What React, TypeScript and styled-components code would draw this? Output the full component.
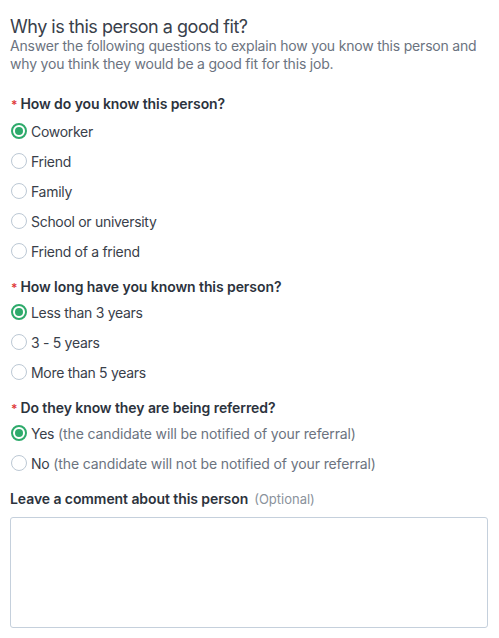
import React, { FC, useState } from 'react';
import styled, { createGlobalStyle } from 'styled-components';

const GlobalStyle = createGlobalStyle`
  body {
    margin: 0;
    background: #fff;
    font-family: Inter, "Noto Sans", sans-serif;
    color: #333a45;
  }
`;

const StyledForm = styled.div`
  padding: 17px 11px 10px 10px;
`;

const StyledHeading = styled.h2`
  margin: 0;
  font-size: 18px;
  font-weight: 400;
  line-height: 20px;
  letter-spacing: -0.48px;
  color: #39404a;
`;

const StyledIntro = styled.p`
  margin: 0;
  font-size: 14px;
  line-height: 18px;
  letter-spacing: -0.2px;
  color: #6b7380;
`;

const StyledQuestion = styled.fieldset<{ first?: boolean; gap?: number }>`
  border: 0;
  margin: 0;
  padding: 0;
  margin-top: ${(p) => (p.first ? 22 : p.gap ?? 12)}px;
`;

const StyledLabel = styled.div`
  display: flex;
  align-items: baseline;
  font-size: 14px;
  font-weight: 600;
  line-height: 18px;
  letter-spacing: -0.08px;
  color: #2c333d;
`;

const StyledStar = styled.span`
  color: #e03b3b;
  font-size: 12px;
  margin: 0 3px 0 1px;
`;

const StyledOptional = styled.span`
  font-weight: 400;
  font-size: 13px;
  letter-spacing: 0;
  color: #8a929c;
  margin-left: 6px;
`;

const StyledOptions = styled.div<{ first?: boolean }>`
  margin-top: ${(p) => (p.first ? 2 : 0)}px;
`;

const StyledOption = styled.label`
  display: flex;
  align-items: center;
  height: 30px;
  font-size: 14px;
  letter-spacing: -0.3px;
  color: #39404a;
  cursor: pointer;
`;

const StyledRadio = styled.span<{ checked: boolean }>`
  box-sizing: border-box;
  flex: none;
  width: 16px;
  height: 16px;
  border-radius: 50%;
  margin: 0 4px 0 1px;
  border: ${(p) => (p.checked ? '2px solid #2eaa6b' : '1px solid #bcc8d4')};
  display: flex;
  align-items: center;
  justify-content: center;
  &::after {
    content: '';
    display: ${(p) => (p.checked ? 'block' : 'none')};
    width: 8px;
    height: 8px;
    border-radius: 50%;
    background: #2eaa6b;
  }
`;

const StyledHint = styled.span`
  color: #6b7380;
  letter-spacing: -0.12px;
  margin-left: 4px;
`;

const StyledTextarea = styled.textarea`
  display: block;
  box-sizing: border-box;
  width: 478px;
  height: 111px;
  margin-top: 9px;
  border: 1px solid #c5d0dc;
  border-radius: 3px;
  resize: none;
  font-family: inherit;
  font-size: 14px;
`;

type Option = { label: string; hint?: string };

const questions: { title: string; options: Option[]; initial: number }[] = [
  {
    title: 'How do you know this person?',
    options: [
      { label: 'Coworker' },
      { label: 'Friend' },
      { label: 'Family' },
      { label: 'School or university' },
      { label: 'Friend of a friend' }
    ],
    initial: 0
  },
  {
    title: 'How long have you known this person?',
    options: [{ label: 'Less than 3 years' }, { label: '3 - 5 years' }, { label: 'More than 5 years' }],
    initial: 0
  },
  {
    title: 'Do they know they are being referred?',
    options: [
      { label: 'Yes', hint: '(the candidate will be notified of your referral)' },
      { label: 'No', hint: '(the candidate will not be notified of your referral)' }
    ],
    initial: 0
  }
];

const Question: FC<{ title: string; options: Option[]; initial: number; first?: boolean }> = ({
  title,
  options,
  initial,
  first
}) => {
  const [value, setValue] = useState(initial);
  return (
    <StyledQuestion first={first}>
      <StyledLabel>
        <StyledStar>*</StyledStar>
        {title}
      </StyledLabel>
      <StyledOptions first={first}>
        {options.map((o, i) => (
          <StyledOption key={o.label} onClick={() => setValue(i)}>
            <StyledRadio checked={value === i} />
            {o.label}
            {o.hint && <StyledHint>{o.hint}</StyledHint>}
          </StyledOption>
        ))}
      </StyledOptions>
    </StyledQuestion>
  );
};

const App: FC = () => (
  <>
    <GlobalStyle />
    <StyledForm>
      <StyledHeading>Why is this person a good fit?</StyledHeading>
      <StyledIntro>
        Answer the following questions to explain how you know this person and why you think they would be a good
        fit for this job.
      </StyledIntro>
      {questions.map((q, i) => (
        <Question key={q.title} {...q} first={i === 0} />
      ))}
      <StyledQuestion gap={12}>
        <StyledLabel>
          Leave a comment about this person
          <StyledOptional>(Optional)</StyledOptional>
        </StyledLabel>
        <StyledTextarea />
      </StyledQuestion>
    </StyledForm>
  </>
);

export default App;
